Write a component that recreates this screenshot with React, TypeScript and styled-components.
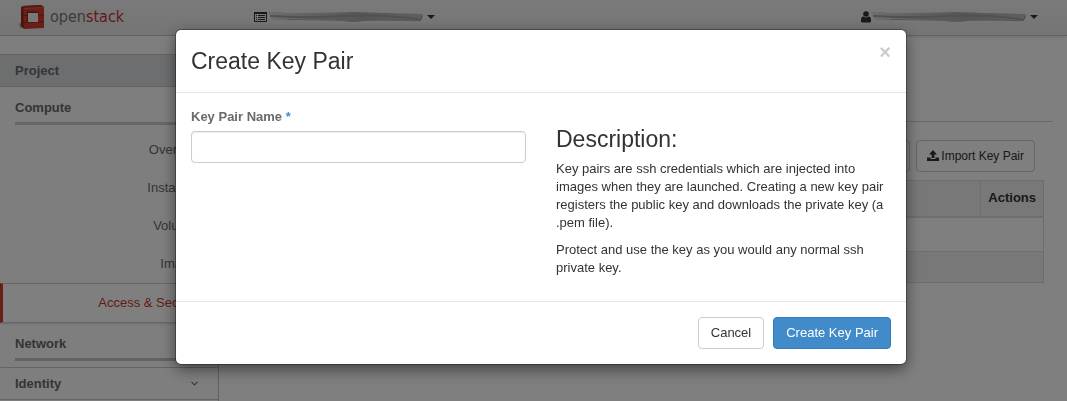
import React from 'react';
import styled, { createGlobalStyle, css } from 'styled-components';

const GlobalStyle = createGlobalStyle`
  * { box-sizing: border-box; }
  body {
    margin: 0;
    background: #fff;
    color: #333;
    font: 13px/18px "Liberation Sans", Arial, sans-serif;
  }
  h1, h2, h3, p, ul { margin: 0; padding: 0; font-weight: 400; }
  button, input { font: inherit; color: inherit; }
`;

const Page = styled.div`
  min-height: 100vh;
  display: flex;
  flex-direction: column;
`;

const TopBar = styled.header`
  height: 36px;
  flex: none;
  display: flex;
  align-items: center;
  padding: 0 29px 2px 19px;
  background: linear-gradient(#f4f4f4, #eaeaea);
  border-bottom: 1px solid #c4c4c4;
  box-shadow: 0 1px 3px rgba(0, 0, 0, 0.15);
`;

const Brand = styled.a`
  display: flex;
  align-items: center;
  gap: 4px;
  width: 105px;
  margin-right: 130px;
  text-decoration: none;
  svg { flex: none; }
`;

const Wordmark = styled.span`
  color: #777;
  font: 16px/28px "DejaVu Sans Condensed", sans-serif;
  b { color: #c8323a; font-weight: 400; }
`;

const MenuButton = styled.button<{ $end?: boolean }>`
  display: flex;
  align-items: center;
  border: 0;
  padding: 0;
  background: none;
  color: #333;
  margin-left: ${(p) => (p.$end ? 'auto' : '0')};
`;

const CaretIcon = styled.svg`
  margin-left: 3px;
`;

const Columns = styled.div`
  flex: 1;
  display: flex;
`;

const Sidebar = styled.nav`
  width: 219px;
  flex: none;
  padding-top: 18px;
  border-right: 1px solid #c4c4c4;
  background: #fcfcfc;
`;

const PanelTitle = styled.h2<{ $active?: boolean }>`
  display: flex;
  align-items: center;
  justify-content: space-between;
  height: 33px;
  padding: 0 20px 0 15px;
  border: solid #c8c8c8;
  border-width: 1px 0;
  background: ${(p) => (p.$active ? '#dadde0' : 'transparent')};
  color: #6a6a6a;
  font-size: 13px;
  font-weight: 700;
`;

const GroupTitle = styled.h3<{ $active?: boolean }>`
  margin: 0 0 6px 15px;
  padding: 12px 0 5px;
  border-bottom: 3px solid ${(p) => (p.$active ? '#cfcfcf' : '#c4c4c4')};
  color: #6a6a6a;
  font-size: 13px;
  font-weight: 700;
`;

const NavList = styled.ul`
  list-style: none;
`;

const NavLink = styled.a<{ $active?: boolean }>`
  display: block;
  padding: 10px 15px;
  text-align: right;
  text-decoration: none;
  color: #6a6a6a;
  ${(p) =>
    p.$active &&
    css`
      border: solid #ccc;
      border-width: 1px 0 1px 3px;
      border-left-color: #d93a2b;
      background: #fff;
      color: #c9382c;
      box-shadow: 0 1px 2px rgba(0, 0, 0, 0.15);
    `}
`;

const Main = styled.main`
  flex: 1;
  padding: 85px 14px 0 15px;
`;

const Content = styled.section`
  border-top: 1px solid #d2d2d2;
  padding: 18px 9px 0 0;
`;

const Actions = styled.div`
  display: flex;
  justify-content: flex-end;
  gap: 6px;
  padding: 0 9px 8px 0;
`;

const SmallButton = styled.button`
  display: flex;
  align-items: center;
  gap: 2px;
  height: 32px;
  padding: 0 10px;
  border: 1px solid #ccc;
  border-radius: 4px;
  background: #fff;
  font-size: 12px;
`;

const DataTable = styled.table`
  width: 100%;
  border-collapse: collapse;
  border: 1px solid #ddd;
  th {
    height: 36px;
    padding: 0 7px;
    border: 1px solid #ddd;
    border-bottom-width: 2px;
    background: #f1f1f1;
    text-align: left;
  }
  th:last-child { width: 62px; }
  td { height: 35px; border: 1px solid #ddd; }
  tfoot td { height: 31px; background: #f1f1f1; }
`;

const Backdrop = styled.div`
  position: fixed;
  inset: 0;
  overflow: hidden;
  padding: 30px 0 0 15px;
  background: rgba(0, 0, 0, 0.5);
`;

const Dialog = styled.form`
  width: 730px;
  max-width: 100%;
  margin: 0 auto;
  border-radius: 5px;
  background: #fff;
  box-shadow: 0 0 0 1px rgba(0, 0, 0, 0.3), 0 5px 15px rgba(0, 0, 0, 0.5);
`;

const DialogHeader = styled.div`
  display: flex;
  justify-content: space-between;
  align-items: flex-start;
  padding: 15px;
  border-bottom: 1px solid #e5e5e5;
`;

const Heading = styled.h2`
  font-size: 23px;
  line-height: 32px;
`;

const CloseButton = styled.button`
  border: 0;
  padding: 0;
  background: none;
  color: #ccc;
  font-size: 20px;
  font-weight: 700;
  line-height: 14px;
`;

const DialogBody = styled.div`
  display: grid;
  grid-template-columns: 1fr 1fr;
  gap: 30px;
  padding: 15px;
`;

const FieldLabel = styled.label`
  display: block;
  margin-bottom: 5px;
  color: #6a6a6a;
  font-weight: 700;
  span { color: #428bca; }
`;

const TextInput = styled.input`
  display: block;
  width: 100%;
  height: 32px;
  padding: 6px 12px;
  border: 1px solid #ccc;
  border-radius: 4px;
  box-shadow: inset 0 1px 1px rgba(0, 0, 0, 0.075);
`;

const Description = styled.div`
  padding-top: 18px;
  h3 { font-size: 23px; line-height: 26px; margin-bottom: 8px; }
  p { margin-bottom: 9px; }
`;

const DialogFooter = styled.div`
  display: flex;
  justify-content: flex-end;
  gap: 9px;
  padding: 15px;
  border-top: 1px solid #e5e5e5;
`;

const Button = styled.button<{ $primary?: boolean }>`
  height: 32px;
  padding: 0 12px;
  border: 1px solid ${(p) => (p.$primary ? '#357ebd' : '#ccc')};
  border-radius: 4px;
  background: ${(p) => (p.$primary ? '#428bca' : '#fff')};
  color: ${(p) => (p.$primary ? '#fff' : '#333')};
`;

const CubeLogo = () => (
  <svg width="27" height="27" viewBox="0 0 27 27" aria-hidden="true">
    <path d="M0 21 3 19V26L1 24Z" fill="#a8a8a8" />
    <path d="M2 4 5 3V26L2 23Z" fill="#8e2a22" />
    <path d="M4 3 22 2 25 4V25L5 26Z" fill="#d23c2d" />
    <path d="M3 3 22 2 25 4 5 5Z" fill="#a93227" />
    <path d="M5 5.5 25 4.5" stroke="#e2604f" />
    <path d="M8 8.5H19V19.5H8Z" fill="#8e2a22" />
    <path d="M9 10H19V19H9Z" fill="#f0f0f0" />
    <path d="M2 11.5 5 12.5H8M2 18.5 5 19.5H8M19 12H25M19 19H25" stroke="#93291f" fill="none" />
  </svg>
);

const ListIcon = () => (
  <svg width="14" height="12" viewBox="0 0 14 12" aria-hidden="true">
    <path d="M.5 1.5H12.5V10.5H.5Z" fill="none" stroke="#333" />
    <path d="M0 1H13V3H0Z" fill="#333" />
    <path d="M2 4.5H3M4 4.5H11M2 6.5H3M4 6.5H11M2 8.5H3M4 8.5H11" stroke="#333" />
  </svg>
);

const UserIcon = () => (
  <svg width="10" height="12" viewBox="0 0 10 12" aria-hidden="true">
    <circle cx="5" cy="3" r="2.8" fill="#333" />
    <path d="M0 9Q0 5.5 2.4 5.5Q5 7.5 7.6 5.5Q10 5.5 10 9V10.5Q10 11.5 8.8 11.5H1.2Q0 11.5 0 10.5Z" fill="#333" />
  </svg>
);

const Smear = ({ id, width }: { id: string; width: number }) => (
  <svg width={width} height="12" viewBox="0 0 156 12" preserveAspectRatio="none" aria-hidden="true">
    <defs>
      <linearGradient id={id}>
        <stop offset="0" stopColor="#dcdcdc" />
        <stop offset="0.3" stopColor="#c2c2c2" />
        <stop offset="0.6" stopColor="#acacac" />
        <stop offset="1" stopColor="#c0c0c0" />
      </linearGradient>
    </defs>
    <path d="M0 1Q8 0 18 2Q60 2 84 1Q120 2 155 3L153 10Q120 9 95 10Q86 12 74 10Q30 9 4 9Z" fill={`url(#${id})`} />
    <path d="M2 5Q40 7 75 5T150 8" fill="none" stroke="#a2a2a2" strokeWidth="2" />
    <path d="M20 8.5Q70 7 110 8.5T150 9.5" fill="none" stroke="#b0b0b0" />
    <path d="M150 9.5Q154 9 154 5" fill="none" stroke="#8c8c8c" />
  </svg>
);

const Caret = () => (
  <CaretIcon width="8" height="4" viewBox="0 0 8 4" aria-hidden="true">
    <path d="M0 0H8L4 4Z" fill="#333" />
  </CaretIcon>
);

const UploadIcon = () => (
  <svg width="12" height="12" viewBox="0 0 12 12" aria-hidden="true">
    <path d="M6 0 10 4.4H7.4V8H4.6V4.4H2Z" fill="#333" />
    <path d="M0 7.6H3.6V9H8.4V7.6H12V11H0Z" fill="#333" />
  </svg>
);

const Chevron = () => (
  <svg width="7" height="5" viewBox="0 0 7 5" aria-hidden="true">
    <path d="M.5 .8 3.5 3.8 6.5 .8" fill="none" stroke="#777" strokeWidth="1.2" />
  </svg>
);

export default function App() {
  return (
    <>
      <GlobalStyle />
      <Page>
        <TopBar>
          <Brand href="#"><CubeLogo /><Wordmark>open<b>stack</b></Wordmark></Brand>
          <MenuButton aria-label="Project"><ListIcon /><Smear id="smear-a" width={156} /><Caret /></MenuButton>
          <MenuButton $end aria-label="User"><UserIcon /><Smear id="smear-b" width={156} /><Caret /></MenuButton>
        </TopBar>
        <Columns>
          <Sidebar>
            <PanelTitle $active>Project</PanelTitle>
            <GroupTitle $active>Compute</GroupTitle>
            <NavList>
              {['Overview', 'Instances', 'Volumes', 'Images'].map((name) => (
                <li key={name}><NavLink href="#">{name}</NavLink></li>
              ))}
              <li><NavLink href="#" $active>Access &amp; Security</NavLink></li>
            </NavList>
            <GroupTitle>Network</GroupTitle>
            <PanelTitle>Identity<Chevron /></PanelTitle>
          </Sidebar>
          <Main>
            <Content>
              <Actions>
                <SmallButton aria-label="Create Key Pair" />
                <SmallButton><UploadIcon />Import Key Pair</SmallButton>
              </Actions>
              <DataTable>
                <thead><tr><th /><th>Actions</th></tr></thead>
                <tbody><tr><td colSpan={2} /></tr></tbody>
                <tfoot><tr><td colSpan={2} /></tr></tfoot>
              </DataTable>
            </Content>
          </Main>
        </Columns>
      </Page>
      <Backdrop>
        <Dialog role="dialog" aria-labelledby="dialog-title" onSubmit={(e) => e.preventDefault()}>
          <DialogHeader>
            <Heading id="dialog-title">Create Key Pair</Heading>
            <CloseButton type="button" aria-label="Close">×</CloseButton>
          </DialogHeader>
          <DialogBody>
            <div>
              <FieldLabel htmlFor="key-name">Key Pair Name <span>*</span></FieldLabel>
              <TextInput id="key-name" type="text" />
            </div>
            <Description>
              <h3>Description:</h3>
              <p>
                Key pairs are ssh credentials which are injected into images when they are
                launched. Creating a new key pair registers the public key and downloads the
                private key (a .pem file).
              </p>
              <p>Protect and use the key as you would any normal ssh private key.</p>
            </Description>
          </DialogBody>
          <DialogFooter>
            <Button type="button">Cancel</Button>
            <Button type="submit" $primary>Create Key Pair</Button>
          </DialogFooter>
        </Dialog>
      </Backdrop>
    </>
  );
}
